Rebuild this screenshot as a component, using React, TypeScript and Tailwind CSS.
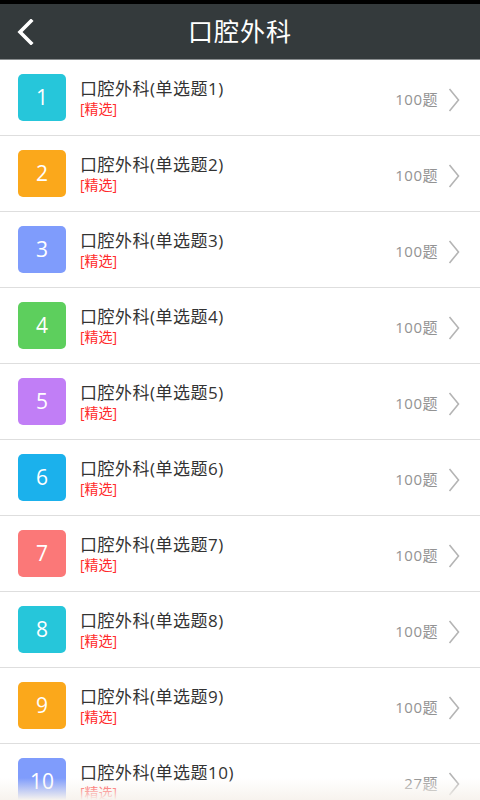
import React from 'react';

const COLORS = ['#26c6da', '#fba81b', '#7f9cfc', '#5dcf5d', '#c17ef6', '#1bb1ec', '#fb7878', '#26c6da', '#fba81b', '#7f9cfc'];

const items = COLORS.map((color, i) => ({
    no: i + 1,
    color,
    count: i === 9 ? 27 : 100,
}));

const font = { fontFamily: '"Open Sans", "Noto Sans CJK SC", sans-serif' };

const App: React.FC = () => {
    return (
        <div className="relative w-[480px] h-[800px] overflow-hidden bg-white" style={font}>
            {/* status strip */}
            <div className="h-[4px] bg-black" />

            {/* title bar */}
            <header className="h-[56px] bg-[#343a3c] flex items-center relative border-b border-[#8a8e90]">
                <div className="w-[48px] flex justify-center pl-[2px]">
                    <svg width="18" height="26" viewBox="0 0 18 26" fill="none">
                        <path d="M15 2 L4 13 L15 24" stroke="white" strokeWidth="3.6" strokeLinecap="square" />
                    </svg>
                </div>
                <h1 className="flex-1 text-center text-white text-[25px] pr-[48px] tracking-[1px]">口腔外科</h1>
            </header>

            {/* list */}
            <ul>
                {items.map(item => (
                    <li key={item.no} className="h-[76px] flex items-center border-b border-[#dedede]">
                        <div
                            className="ml-[18px] w-[48px] h-[47px] rounded-[5px] flex items-center justify-center text-white text-[21px]"
                            style={{ backgroundColor: item.color }}
                        >
                            {item.no}
                        </div>
                        <div className="ml-[14px] flex-1 flex flex-col">
                            <p className="text-[#333333] text-[17px] leading-[22px] tracking-[0.5px]">口腔外科(单选题{item.no})</p>
                            <p className="text-[#ff2b2b] text-[14px] leading-[18px]">[精选]</p>
                        </div>
                        <span className="text-[#939393] text-[15px] tracking-[0.5px] mt-[4px]">{item.count}题</span>
                        <svg className="ml-[10px] mr-[20px] mt-[4px]" width="12" height="24" viewBox="0 0 12 24" fill="none">
                            <path d="M1.5 1 L10.5 12 L1.5 23" stroke="#b4b4b4" strokeWidth="1.6" />
                        </svg>
                    </li>
                ))}
            </ul>

            {/* bottom fade */}
            <div className="absolute left-0 right-0 bottom-0 h-[22px] bg-gradient-to-b from-[#f7f3ee]/0 to-[#f7f3ee]" />
        </div>
    );
};

export default App;
